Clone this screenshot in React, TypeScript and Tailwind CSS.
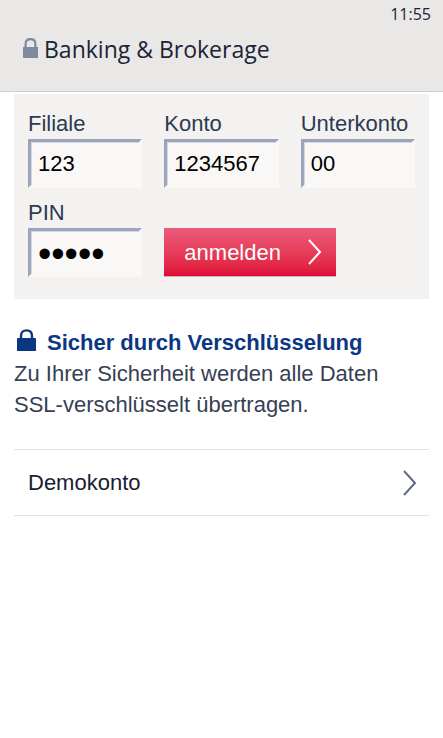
import React, { useState } from 'react'

const HeaderLock = ({ className }: { className: string }) => (
    <svg viewBox="0 0 15 20" className={className} fill="none" aria-hidden="true">
        <path d="M0 9h15v11H0z" fill="currentColor" />
        <path d="M2.600 10V6C2.600 3 4.600 1.200 7.500 1.200S12.400 3 12.400 6v4" stroke="currentColor" strokeWidth="2.200" />
    </svg>
)

const SecureLock = ({ className }: { className: string }) => (
    <svg viewBox="0 0 19 22" className={className} fill="none" aria-hidden="true">
        <rect y="9" width="19" height="13" rx="0.5" fill="currentColor" />
        <path d="M4 10V7C4 3.500 6.200 1.400 9.500 1.400S15 3.500 15 7v3" stroke="currentColor" strokeWidth="2.400" />
    </svg>
)

const Chevron = ({ className }: { className: string }) => (
    <svg viewBox="0 0 14 26" className={className} fill="none" aria-hidden="true">
        <path d="M1 1l11 12L1 25" stroke="currentColor" strokeWidth="2" />
    </svg>
)

type FieldProps = {
    id: string
    label: string
    value: string
    type?: string
    inputClass?: string
    onChange: (value: string) => void
}

const Field = ({ id, label, value, type = "text", inputClass = "text-[22px]", onChange }: FieldProps) => (
    <div className="flex min-w-0 flex-col">
        <label htmlFor={id} className="text-[22px] leading-[30px] text-[#2d3a50]">
            {label}
        </label>
        <input
            id={id}
            type={type}
            value={value}
            onChange={(e) => onChange(e.target.value)}
            className={`h-[49px] w-full rounded-none border-3 border-t-[#9aa5b9] border-r-[#f9f8f7] border-b-[#f9f8f7] border-l-[#9aa5b9] bg-[#f9f8f7] px-[7px] text-black shadow-[inset_1px_1px_0_#d3d8e2] outline-none ${inputClass}`}
        />
    </div>
)

const App = () => {
    const [filiale, setFiliale] = useState("123")
    const [konto, setKonto] = useState("1234567")
    const [unterkonto, setUnterkonto] = useState("00")
    const [pin, setPin] = useState("12345")

    return (
        <div className="min-h-screen bg-white font-['Liberation_Sans',Arial,sans-serif]">
            <header className="border-b border-[#cfcfcf] bg-[#e9e8e6] pb-[25px] font-['Open_Sans','Noto_Sans',sans-serif] text-[#1c2336]">
                <div className="px-3 pt-1 text-right text-[16px] leading-5">11:55</div>
                <div className="flex items-center gap-[6px] px-[23px] pt-2">
                    <HeaderLock className="mb-0.5 h-5 w-[15px] text-[#7f8aa1]" />
                    <h1 className="text-[23px] leading-[34px]">Banking &amp; Brokerage</h1>
                </div>
            </header>

            <main className="px-[14px] pt-[2px]">
                <form
                    onSubmit={(e) => e.preventDefault()}
                    className="grid grid-cols-3 gap-x-[22px] gap-y-[10px] bg-[#f3f2f0] px-[14px] pt-[15px] pb-[22px]"
                >
                    <Field id="filiale" label="Filiale" value={filiale} onChange={setFiliale} />
                    <Field id="konto" label="Konto" value={konto} onChange={setKonto} />
                    <Field id="unterkonto" label="Unterkonto" value={unterkonto} onChange={setUnterkonto} />
                    <Field id="pin" label="PIN" type="password" inputClass="pt-1 text-[38px]" value={pin} onChange={setPin} />
                    <button
                        type="submit"
                        className="col-span-2 flex h-[49px] w-[172px] items-center justify-between self-end border-b border-[#c9b5b8] bg-linear-to-b from-[#ec5a7b] to-[#e00034] bg-origin-border pr-[14px] pl-5 text-[22px] text-white"
                    >
                        anmelden
                        <Chevron className="h-[26px] w-[14px]" />
                    </button>
                </form>

                {/* Security note */}
                <section className="pt-7 text-[22px] leading-[31px] text-[#364054]">
                    <h2 className="flex items-center gap-[11px] font-bold text-[#0b3782]">
                        <SecureLock className="mb-1.5 ml-[3px] h-[22px] w-[19px] shrink-0" />
                        Sicher durch Verschlüsselung
                    </h2>
                    <p>Zu Ihrer Sicherheit werden alle Daten SSL-verschlüsselt übertragen.</p>
                </section>

                <a
                    href="#demokonto"
                    className="mt-[29px] flex h-[67px] items-center justify-between border-y border-[#dfe1e7] pr-3 pl-[14px] text-[22px] text-[#182033]"
                >
                    Demokonto
                    <Chevron className="h-[26px] w-[14px] text-[#5f6b84]" />
                </a>
            </main>
        </div>
    )
}

export default App
